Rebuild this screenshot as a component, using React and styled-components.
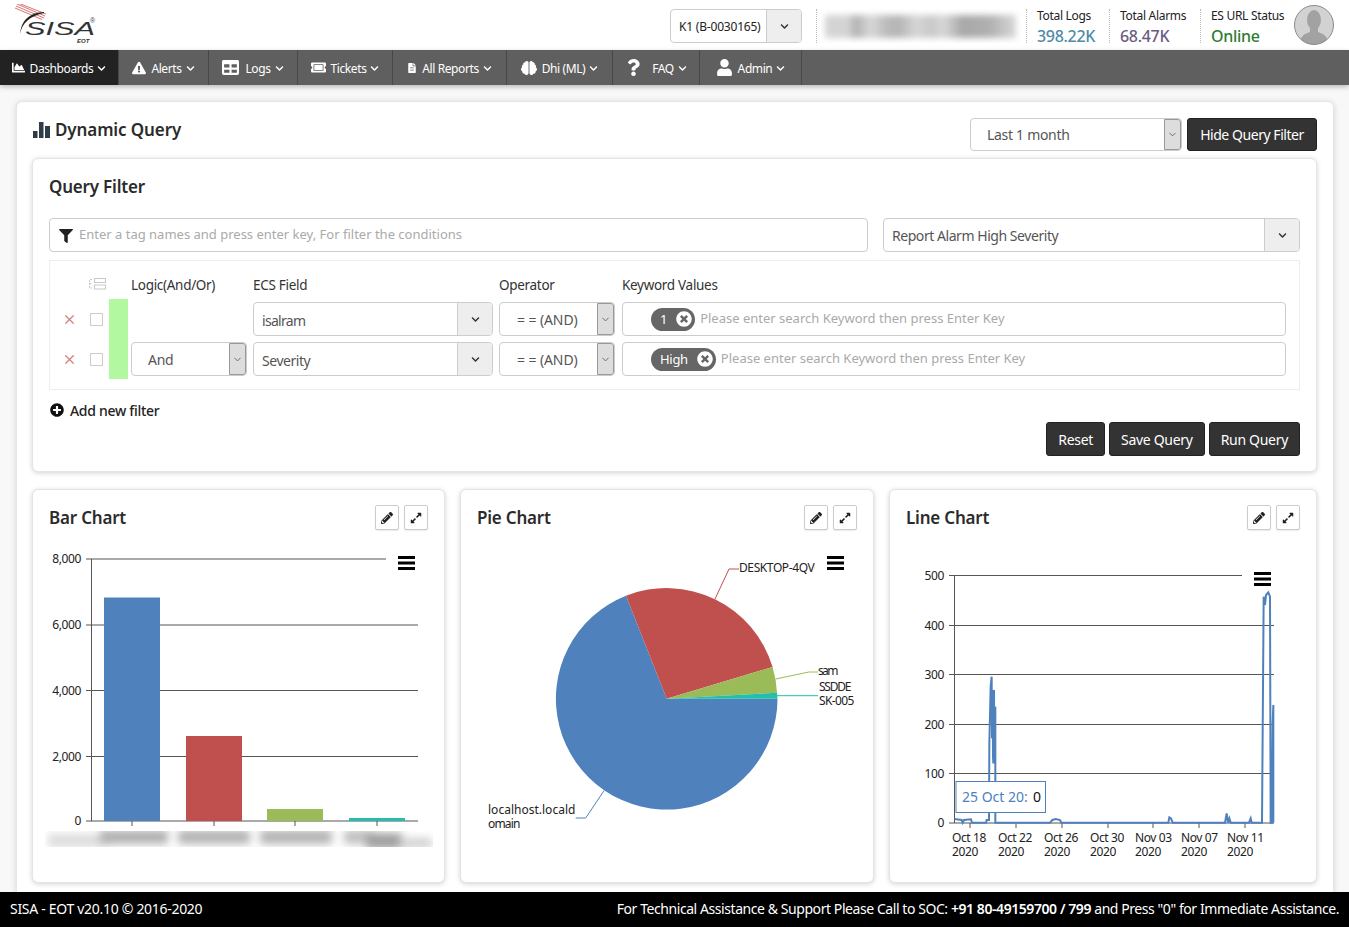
import React from "react";
import styled, { createGlobalStyle } from "styled-components";
import {
  FaChartArea,
  FaExclamationTriangle,
  FaTable,
  FaTicketAlt,
  FaFileAlt,
  FaBrain,
  FaQuestion,
  FaUser,
  FaChevronDown,
  FaFilter,
  FaPlusCircle,
  FaTimesCircle,
  FaPencilAlt,
  FaExpandAlt,
} from "react-icons/fa";
import { X, ChevronDown } from "lucide-react";

const GlobalStyle = createGlobalStyle`
  html, body {
    margin: 0;
    padding: 0;
    background: #f8f8f8;
  }
  * {
    box-sizing: border-box;
  }
  body {
    font-family: "Noto Sans", "Open Sans", sans-serif;
    font-size: 14px;
    color: #333;
    letter-spacing: -0.3px;
  }
`;

const Page = styled.div`
  height: 927px;
  display: flex;
  flex-direction: column;
  overflow: hidden;
`;

const Header = styled.header`
  height: 50px;
  flex: none;
  background: #fff;
  display: flex;
  align-items: center;
  padding: 0 15px;
`;

const Logo = styled.svg`
  width: 84px;
  height: 42px;
  flex: none;
  letter-spacing: 0;
`;

const HeaderRight = styled.div`
  margin-left: auto;
  padding-top: 2px;
  display: flex;
  align-items: center;
`;

const SiteSelect = styled.div`
  width: 132px;
  height: 34px;
  display: flex;
  border: 1px solid #ccc;
  border-radius: 4px;
  overflow: hidden;
  font-size: 12px;
  color: #222;
  margin-right: 14px;
`;

const SiteValue = styled.div`
  flex: 1;
  display: flex;
  align-items: center;
  padding: 1px 0 0 8px;
  letter-spacing: -0.2px;
`;

const ArrowCell = styled.div`
  width: 35px;
  flex: none;
  display: flex;
  align-items: center;
  justify-content: center;
  background: #eee;
  border-left: 1px solid #ccc;
  color: #333;
  font-size: 9px;
`;

const BlurWrap = styled.div`
  width: 210px;
  height: 34px;
  border-left: 1px dotted #bbb;
  padding: 6px 10px 5px 8px;
  overflow: hidden;
`;

const BlurBlock = styled.div`
  height: 23px;
  background: linear-gradient(
    90deg,
    #d4d4d4 0 12%,
    #b2b2b2 16%,
    #d8d8d8 24%,
    #bcbcbc 32%,
    #b4b4b4 38%,
    #d6d6d6 48%,
    #c8c8c8 56%,
    #d8d8d8 62%,
    #a8a8a8 72%,
    #b0b0b0 86%,
    #d8d8d8 100%
  );
  filter: blur(3px);
`;

const Stat = styled.div`
  width: ${(p) => p.$w}px;
  height: 34px;
  border-left: 1px dotted #bbb;
  padding-left: 10px;
  display: flex;
  flex-direction: column;
  justify-content: space-between;
`;

const StatLabel = styled.div`
  font-size: 12px;
  line-height: 14px;
  color: #222;
  white-space: nowrap;
`;

const StatValue = styled.div`
  font-size: 16px;
  line-height: 18px;
  margin-bottom: -2px;
  font-weight: 500;
  color: ${(p) => p.$color};
`;

const Avatar = styled.svg`
  width: 40px;
  height: 40px;
  margin-top: -2px;
  flex: none;
`;

const Nav = styled.nav`
  height: 35px;
  flex: none;
  display: flex;
  background: #5f5f5f;
  box-shadow: 0 2px 5px rgba(0, 0, 0, 0.25);
  position: relative;
`;

const NavItem = styled.div`
  width: ${(p) => p.$w}px;
  padding-top: 2px;
  display: flex;
  align-items: center;
  justify-content: center;
  gap: 5px;
  color: #fff;
  font-size: 12px;
  letter-spacing: -0.4px;
  background: ${(p) => (p.$active ? "#222" : "transparent")};
  border-right: 1px solid #484848;
  white-space: nowrap;

  svg.caret {
    font-size: 9px;
    margin-left: -1px;
  }
`;

const NavIcon = styled.span`
  display: flex;
  font-size: ${(p) => p.$size || 14}px;
  margin-top: -2px;
  margin-right: ${(p) => p.$gap || 0}px;
`;

const Main = styled.main`
  flex: 1;
  min-height: 0;
  padding: 16px 15px 0 16px;
`;

const MainCard = styled.div`
  height: 100%;
  background: #fff;
  border: 1px solid #e6e6e6;
  border-bottom: 0;
  border-radius: 6px 6px 0 0;
  box-shadow: 0 1px 6px rgba(0, 0, 0, 0.15);
  padding: 16px 16px 0 15px;
`;

const TitleRow = styled.div`
  display: flex;
  align-items: center;
  height: 33px;
  margin-bottom: 7px;
`;

const PageTitle = styled.h1`
  margin: 0 auto 0 1px;
  font-size: 17px;
  letter-spacing: -0.1px;
  font-weight: 600;
  color: #2b2b2b;
  display: flex;
  align-items: center;
  gap: 5px;
  position: relative;
  top: -5px;
`;

const Panel = styled.section`
  background: #fff;
  border: 1px solid #e4e4e4;
  border-radius: 6px;
  box-shadow: 0 1px 5px rgba(0, 0, 0, 0.18);
`;

const FilterPanel = styled(Panel)`
  padding: 16px 16px 15px;
  height: 314px;
`;

const PanelTitle = styled.h2`
  margin: 0;
  font-size: 17px;
  letter-spacing: -0.2px;
  line-height: 24px;
  font-weight: 600;
  color: #2b2b2b;
`;

const FilterBar = styled.div`
  margin-top: 19px;
  display: flex;
  justify-content: space-between;
`;

const TagBox = styled.div`
  width: 819px;
  height: 34px;
  border: 1px solid #ccc;
  border-radius: 4px;
  display: flex;
  align-items: center;
  padding: 0 0 2px 9px;
  gap: 6px;
  color: #222;
  font-size: 14px;

  svg {
    margin-top: 3px;
  }
`;

const Placeholder = styled.span`
  color: #aaa;
  font-size: 13px;
  letter-spacing: ${(p) => p.$spacing || "0"};
  white-space: nowrap;
`;

const Select = styled.div`
  width: ${(p) => p.$w}px;
  height: ${(p) => p.$h || 34}px;
  border: 1px solid #ccc;
  border-radius: 4px;
  display: flex;
  overflow: hidden;
  background: #fff;
  font-size: 14px;
  color: #555;
`;

const LogicSelect = styled(Select)`
  grid-column: 4;
`;

const SelectValue = styled.div`
  flex: 1;
  display: flex;
  align-items: center;
  padding-left: ${(p) => p.$pad || 8}px;
  padding-top: ${(p) => (p.$low ? 2 : 0)}px;
  letter-spacing: ${(p) => p.$spacing || "-0.45px"};
  white-space: nowrap;
`;

const NativeArrow = styled.div`
  width: 17px;
  flex: none;
  display: flex;
  align-items: center;
  justify-content: center;
  background: #ddd;
  border: 1px solid #999;
  border-radius: 0 3px 3px 0;
  color: #444;
`;

const RuleTable = styled.div`
  margin-top: 8px;
  border: 1px solid #eee;
  padding-bottom: 10px;
  display: grid;
  grid-template-columns: 34px 25px 22px 122px 246px 123px 664px;
  grid-template-rows: 38px 40px 40px;
  align-items: center;
`;

const ColumnHead = styled.div`
  align-self: end;
  padding-bottom: 5px;
  font-size: 13.5px;
  color: #333;
  white-space: nowrap;
`;

const GlyphHead = styled(ColumnHead)`
  padding-left: 5px;
`;

const RemoveCell = styled.div`
  display: flex;
  justify-content: flex-end;
  padding-right: 7px;
  color: #d2807e;
`;

const Check = styled.div`
  width: 13px;
  height: 13px;
  border: 1px solid #ccc;
  margin-left: 6px;
`;

const GreenBar = styled.div`
  width: 19px;
  grid-column: 3;
  grid-row: 2 / span 2;
  height: 80px;
  background: #b1f8a0;
`;

const KeywordBox = styled.div`
  height: 34px;
  border: 1px solid #ccc;
  border-radius: 4px;
  display: flex;
  align-items: center;
  padding-left: 28px;
  gap: 5px;
`;

const KeywordHint = styled(Placeholder)`
  margin-top: -2px;
`;

const Pill = styled.div`
  height: 23px;
  background: #666;
  border-radius: 12px;
  color: #fff;
  font-size: 13px;
  display: flex;
  align-items: center;
  gap: 9px;
  padding: 0 3px 0 9px;
  svg {
    font-size: 16px;
  }
`;

const AddFilter = styled.div`
  display: flex;
  align-items: center;
  gap: 6px;
  height: 20px;
  margin: 10px 0 0 1px;
  font-size: 14px;
  font-weight: 500;
  color: #222;
  svg {
    font-size: 14px;
    color: #111;
  }
`;

const Actions = styled.div`
  display: flex;
  justify-content: flex-end;
  gap: 4px;
  margin-top: 2px;
`;

const DarkButton = styled.button`
  height: 34px;
  padding: 0 11px;
  background: #333;
  border: 1px solid #222;
  border-radius: 3px;
  color: #fff;
  font: inherit;
  letter-spacing: inherit;
  font-size: 14px;
  white-space: nowrap;
  cursor: pointer;
`;

const HideButton = styled(DarkButton)`
  width: 130px;
  height: 33px;
  margin-left: 5px;
  padding: 0;
  letter-spacing: -0.45px;
`;

const ChartRow = styled.div`
  margin-top: 17px;
  display: grid;
  grid-template-columns: 413px 414px 428px;
  column-gap: 15px;
`;

const ChartCard = styled(Panel)`
  height: 394px;
  overflow: hidden;
`;

const ChartHead = styled.div`
  height: 54px;
  display: flex;
  align-items: flex-start;
  padding: 15px 16px 0;
`;

const ChartTitle = styled.h3`
  margin: 1px auto 0 0;
  font-size: 17px;
  letter-spacing: -0.2px;
  line-height: 24px;
  font-weight: 600;
  color: #2b2b2b;
`;

const IconButton = styled.button`
  width: 24px;
  height: 25px;
  margin-left: 5px;
  padding: 0;
  display: flex;
  align-items: center;
  justify-content: center;
  background: #fff;
  border: 1px solid #ccc;
  border-radius: 2px;
  color: #222;
  font-size: 12px;
  box-shadow: 0 1px 1px rgba(0, 0, 0, 0.08);
`;

const ChartSvg = styled.svg`
  display: block;
  letter-spacing: -0.4px;
  text {
    font-size: 12px;
    fill: #222;
  }
`;

const TipText = styled.text`
  && {
    font-size: 14px;
    letter-spacing: 0;
    fill: ${(p) => p.$color};
  }
`;

const Footer = styled.footer`
  height: 35px;
  flex: none;
  background: #000;
  color: #fff;
  font-size: 14px;
  display: flex;
  align-items: center;
  justify-content: space-between;
  padding: 0 10px 2px;
  position: relative;
`;

const FooterNote = styled.span`
  letter-spacing: -0.43px;
`;

const Strong = styled.b`
  font-weight: 600;
`;

const navItems = [
  { label: "Dashboards", w: 119, active: true, icon: <FaChartArea />, size: 13 },
  { label: "Alerts", w: 90, icon: <FaExclamationTriangle />, size: 14 },
  { label: "Logs", w: 89, icon: <FaTable />, size: 17, gap: 1 },
  { label: "Tickets", w: 95, icon: <FaTicketAlt />, size: 15 },
  { label: "All Reports", w: 114, icon: <FaFileAlt />, size: 10 },
  { label: "Dhi (ML)", w: 106, icon: <FaBrain />, size: 16 },
  { label: "FAQ", w: 87, icon: <FaQuestion />, size: 17, gap: 5 },
  { label: "Admin", w: 102, icon: <FaUser />, size: 17 },
];

const Caret = () => <FaChevronDown className="caret" />;

const ThinCaret = () => <ChevronDown size={11} strokeWidth={1.6} />;

const MenuBars = ({ x, y }) => (
  <g fill="#000">
    <rect x={x} y={y} width="17" height="3" />
    <rect x={x} y={y + 5.5} width="17" height="3" />
    <rect x={x} y={y + 11} width="17" height="3" />
  </g>
);

const AXIS = "#555";

const barSeries = [
  { x: 104, top: 597.5, color: "#4f81bd", tick: 132 },
  { x: 186, top: 736, color: "#c0504d", tick: 214 },
  { x: 267, top: 809, color: "#9bbb59", tick: 295 },
  { x: 349, top: 818, color: "#23bfaa", tick: 377 },
];

const BarChart = () => {
  const grid = [
    { y: 559, label: "8,000", end: 386 },
    { y: 625, label: "6,000", end: 418 },
    { y: 690.5, label: "4,000", end: 418 },
    { y: 756.5, label: "2,000", end: 418 },
    { y: 821, label: "0", end: 418 },
  ];
  return (
    <ChartSvg width="411" height="339" viewBox="33 544 411 339">
      <defs>
        <filter id="labelBlur" x="-10%" y="-100%" width="120%" height="300%">
          <feGaussianBlur stdDeviation="4" />
        </filter>
        <clipPath id="labelClip">
          <rect x="45" y="831" width="388" height="16" />
        </clipPath>
      </defs>
      {grid.map((g) => (
        <g key={g.label}>
          <line x1="86" x2={g.end} y1={g.y} y2={g.y} stroke={AXIS} />
          <text x="81" y={g.y + 4} textAnchor="end">{g.label}</text>
        </g>
      ))}
      <line x1="91.5" x2="91.5" y1="559" y2="821" stroke={AXIS} />
      {barSeries.map((b) => (
        <g key={b.x}>
          <rect x={b.x} y={b.top} width="56" height={821 - b.top} fill={b.color} />
          <line x1={b.tick} x2={b.tick} y1="821" y2="826" stroke={AXIS} />
        </g>
      ))}
      <MenuBars x={398} y={556} />
      <g clipPath="url(#labelClip)">
        <g filter="url(#labelBlur)">
          <rect x="48" y="834" width="60" height="13" fill="#dcdcdc" />
          <rect x="100" y="830" width="68" height="14" fill="#b0b0b0" />
          <rect x="178" y="830" width="72" height="14" fill="#b4b4b4" />
          <rect x="260" y="830" width="72" height="14" fill="#b4b4b4" />
          <rect x="344" y="830" width="30" height="14" fill="#c0c0c0" />
          <rect x="366" y="833" width="36" height="16" fill="#a0a0a0" />
          <rect x="400" y="838" width="32" height="10" fill="#d0d0d0" />
        </g>
      </g>
    </ChartSvg>
  );
};

const PIE = { cx: 666.7, cy: 698.7, r: 110.8 };

const slice = (x1, y1, x2, y2, large, color) => (
  <path
    d={`M${PIE.cx} ${PIE.cy}L${x1} ${y1}A${PIE.r} ${PIE.r} 0 ${large} 1 ${x2} ${y2}Z`}
    fill={color}
  />
);

const PieChart = () => (
  <ChartSvg width="412" height="339" viewBox="461 544 412 339">
    <defs>
      <clipPath id="desktopClip">
        <rect x="739" y="555" width="76" height="20" />
      </clipPath>
    </defs>
    {slice(777.5, 698.7, 626, 595.7, 1, "#4f81bd")}
    {slice(626, 595.7, 772.6, 667, 0, "#c0504d")}
    {slice(772.6, 667, 777, 692.7, 0, "#9bbb59")}
    {slice(777, 692.7, 777.5, 698.7, 0, "#23bfaa")}
    <polyline points="715,599 729,569 739,569" fill="none" stroke="#c0504d" />
    <polyline points="775.7,679 809,672 818,672" fill="none" stroke="#9bbb59" />
    <polyline points="777,695.7 818,695.7" fill="none" stroke="#23bfaa" />
    <polyline points="604,790.7 585.7,818 575.7,818" fill="none" stroke="#4f81bd" />
    <text x="739" y="572" clipPath="url(#desktopClip)">DESKTOP-4QVGH</text>
    <text x="818" y="675" textLength="20">sam</text>
    <text>
      <tspan x="819" y="691" textLength="32">SSDDE</tspan>
      <tspan x="819" y="705" textLength="35">SK-005</tspan>
    </text>
    <text>
      <tspan x="488" y="814" textLength="87">localhost.locald</tspan>
      <tspan x="488" y="828" textLength="32">omain</tspan>
    </text>
    <MenuBars x={827} y={556} />
  </ChartSvg>
);

// traced from the chart, in the coordinates of the 3x crop
const linePoints = [
  [193, 987], [215, 990], [218, 998], [222, 990], [243, 988], [246, 998], [288, 998], [290, 990],
  [297, 990], [298, 760], [302, 590], [305, 560], [306, 745], [307, 700], [308, 600], [309, 800],
  [310, 820], [311, 640], [312, 600], [313, 760], [314, 820], [315, 700], [316, 650], [316, 998],
  [480, 998], [487, 990], [497, 987], [510, 990], [514, 998], [835, 998], [838, 982], [843, 985],
  [848, 998], [1005, 998], [1010, 970], [1014, 998], [1018, 985], [1022, 998], [1077, 998], [1082, 985],
  [1085, 998], [1116, 998], [1121, 320], [1125, 345], [1128, 315], [1135, 307], [1140, 320], [1142, 998],
  [1146, 998], [1148, 700], [1150, 645], [1150, 998],
];

const LineChart = () => {
  const grid = [
    { y: 575.5, label: "500", end: 1242 },
    { y: 625.5, label: "400", end: 1274 },
    { y: 674.5, label: "300", end: 1274 },
    { y: 724.5, label: "200", end: 1274 },
    { y: 773.5, label: "100", end: 1274 },
    { y: 823, label: "0", end: 1274 },
  ];
  const ticks = [
    { x: 970, tx: 952, label: "Oct 18" },
    { x: 1016, tx: 998, label: "Oct 22" },
    { x: 1062, tx: 1044, label: "Oct 26" },
    { x: 1108, tx: 1090, label: "Oct 30" },
    { x: 1153, tx: 1135, label: "Nov 03" },
    { x: 1199, tx: 1181, label: "Nov 07" },
    { x: 1245, tx: 1227, label: "Nov 11" },
  ];
  const points = linePoints.map(([x, y]) => `${890 + x / 3},${490 + y / 3}`).join(" ");
  return (
    <ChartSvg width="426" height="339" viewBox="890 544 426 339">
      {grid.map((g) => (
        <g key={g.label}>
          <line x1="949" x2={g.end} y1={g.y} y2={g.y} stroke={AXIS} />
          <text x="944" y={g.y + 4} textAnchor="end">{g.label}</text>
        </g>
      ))}
      <line x1="954.5" x2="954.5" y1="575" y2="823" stroke={AXIS} />
      {ticks.map((t) => (
        <g key={t.label}>
          <line x1={t.x} x2={t.x} y1="823" y2="828" stroke={AXIS} />
          <text>
            <tspan x={t.tx} y="842">{t.label}</tspan>
            <tspan x={t.tx} y="856">2020</tspan>
          </text>
        </g>
      ))}
      <polyline points={points} fill="none" stroke="#4f81bd" strokeWidth="2" />
      <MenuBars x={1254} y={572} />
      <rect x="956" y="781.5" width="89.5" height="31" fill="#fff" stroke="#4f81bd" />
      <TipText x="962" y="802" $color="#4f81bd">25 Oct 20:</TipText>
      <TipText x="1033" y="802" $color="#111">0</TipText>
    </ChartSvg>
  );
};

const ChartPanel = ({ title, children }) => (
  <ChartCard>
    <ChartHead>
      <ChartTitle>{title}</ChartTitle>
      <IconButton><FaPencilAlt /></IconButton>
      <IconButton><FaExpandAlt /></IconButton>
    </ChartHead>
    {children}
  </ChartCard>
);

const ListGlyph = () => (
  <svg width="17" height="12" viewBox="0 0 17 12" fill="none" stroke="#c9c9c9">
    <rect x="5.5" y="0.5" width="11" height="4" />
    <rect x="5.5" y="7" width="11" height="4" />
    <path d="M3 1.5H0.5v8.5H3M0.5 5.5H3" strokeDasharray="2 1" />
  </svg>
);

const StatsGlyph = () => (
  <svg width="17" height="16" viewBox="0 0 17 16" fill="#2f3b46">
    <rect x="0" y="9" width="4.5" height="7" />
    <rect x="6" y="0" width="4.5" height="16" />
    <rect x="12" y="4" width="5" height="12" />
  </svg>
);

const SisaLogo = () => (
  <Logo viewBox="0 0 84 42">
    <g stroke="#c8373b" strokeWidth="0.7">
      <line x1="1" y1="2" x2="29" y2="14" />
      <line x1="2" y1="0" x2="30" y2="12" />
      <line x1="0" y1="4" x2="27" y2="15.5" />
      <line x1="3" y1="-1" x2="31" y2="10" />
    </g>
    <path d="M29 8C16 9 7 14 5 30C7 19 15 12 29 9Z" fill="#222" />
    <text x="10" y="31" textLength="70" lengthAdjust="spacingAndGlyphs" fontFamily="Liberation Sans" fontStyle="italic" fontSize="18" fill="#333">SISA</text>
    <text x="75" y="19" fontFamily="Liberation Sans" fontSize="7" fill="#444">®</text>
    <text x="62" y="39" fontFamily="Liberation Sans" fontStyle="italic" fontWeight="700" fontSize="6" fill="#333">EOT</text>
  </Logo>
);

const App = () => (
  <Page>
    <GlobalStyle />
    <Header>
      <SisaLogo />
      <HeaderRight>
        <SiteSelect>
          <SiteValue>K1 (B-0030165)</SiteValue>
          <ArrowCell><FaChevronDown /></ArrowCell>
        </SiteSelect>
        <BlurWrap><BlurBlock /></BlurWrap>
        <Stat $w={83}>
          <StatLabel>Total Logs</StatLabel>
          <StatValue $color="#4f8aa8">398.22K</StatValue>
        </Stat>
        <Stat $w={91}>
          <StatLabel>Total Alarms</StatLabel>
          <StatValue $color="#6b5b83">68.47K</StatValue>
        </Stat>
        <Stat $w={94}>
          <StatLabel>ES URL Status</StatLabel>
          <StatValue $color="#2e7d32">Online</StatValue>
        </Stat>
        <Avatar viewBox="0 0 40 40">
          <defs>
            <clipPath id="avatarClip">
              <ellipse cx="20" cy="20" rx="19.5" ry="19.5" />
            </clipPath>
          </defs>
          <g clipPath="url(#avatarClip)">
            <rect width="40" height="40" fill="#d2d2d2" />
            <ellipse cx="20" cy="15" rx="7" ry="10" fill="#a2a2a2" />
            <path d="M16 22h8v5c5 2 10 3 10 13H6c0-10 5-11 10-13z" fill="#a2a2a2" />
          </g>
          <circle cx="20" cy="20" r="19.5" fill="none" stroke="#8a8a8a" />
        </Avatar>
      </HeaderRight>
    </Header>

    <Nav>
      {navItems.map((item) => (
        <NavItem key={item.label} $w={item.w} $active={item.active}>
          <NavIcon $size={item.size} $gap={item.gap}>{item.icon}</NavIcon>
          {item.label}
          <Caret />
        </NavItem>
      ))}
    </Nav>

    <Main>
      <MainCard>
        <TitleRow>
          <PageTitle><StatsGlyph />Dynamic Query</PageTitle>
          <Select $w={212} $h={33}>
            <SelectValue $pad={16} $spacing="-0.3px">Last 1 month</SelectValue>
            <NativeArrow><ThinCaret /></NativeArrow>
          </Select>
          <HideButton>Hide Query Filter</HideButton>
        </TitleRow>

        <FilterPanel>
          <PanelTitle>Query Filter</PanelTitle>
          <FilterBar>
            <TagBox>
              <FaFilter />
              <Placeholder>Enter a tag names and press enter key, For filter the conditions</Placeholder>
            </TagBox>
            <Select $w={417}>
              <SelectValue $spacing="-0.45px">Report Alarm High Severity</SelectValue>
              <ArrowCell><FaChevronDown /></ArrowCell>
            </Select>
          </FilterBar>

          <RuleTable>
            <span />
            <GlyphHead><ListGlyph /></GlyphHead>
            <span />
            <ColumnHead>Logic(And/Or)</ColumnHead>
            <ColumnHead>ECS Field</ColumnHead>
            <ColumnHead>Operator</ColumnHead>
            <ColumnHead>Keyword Values</ColumnHead>

            <RemoveCell><X size={15} strokeWidth={2} /></RemoveCell>
            <Check />
            <GreenBar />
            <span />
            <Select $w={240}>
              <SelectValue $low $spacing="-0.7px">isalram</SelectValue>
              <ArrowCell><FaChevronDown /></ArrowCell>
            </Select>
            <Select $w={116}>
              <SelectValue $pad={17} $spacing="-0.1px">= = (AND)</SelectValue>
              <NativeArrow><ThinCaret /></NativeArrow>
            </Select>
            <KeywordBox>
              <Pill>1<FaTimesCircle /></Pill>
              <KeywordHint>Please enter search Keyword then press Enter Key</KeywordHint>
            </KeywordBox>

            <RemoveCell><X size={15} strokeWidth={2} /></RemoveCell>
            <Check />
            <LogicSelect $w={116}>
              <SelectValue $pad={16} $spacing="-0.3px">And</SelectValue>
              <NativeArrow><ThinCaret /></NativeArrow>
            </LogicSelect>
            <Select $w={240}>
              <SelectValue $low>Severity</SelectValue>
              <ArrowCell><FaChevronDown /></ArrowCell>
            </Select>
            <Select $w={116}>
              <SelectValue $pad={17} $spacing="-0.1px">= = (AND)</SelectValue>
              <NativeArrow><ThinCaret /></NativeArrow>
            </Select>
            <KeywordBox>
              <Pill>High<FaTimesCircle /></Pill>
              <KeywordHint>Please enter search Keyword then press Enter Key</KeywordHint>
            </KeywordBox>
          </RuleTable>

          <AddFilter><FaPlusCircle />Add new filter</AddFilter>

          <Actions>
            <DarkButton>Reset</DarkButton>
            <DarkButton>Save Query</DarkButton>
            <DarkButton>Run Query</DarkButton>
          </Actions>
        </FilterPanel>

        <ChartRow>
          <ChartPanel title="Bar Chart"><BarChart /></ChartPanel>
          <ChartPanel title="Pie Chart"><PieChart /></ChartPanel>
          <ChartPanel title="Line Chart"><LineChart /></ChartPanel>
        </ChartRow>
      </MainCard>
    </Main>

    <Footer>
      <span>SISA - EOT v20.10 © 2016-2020</span>
      <FooterNote>
        For Technical Assistance &amp; Support Please Call to SOC: <Strong>+91 80-49159700 / 799</Strong> and Press "0" for Immediate Assistance.
      </FooterNote>
    </Footer>
  </Page>
);

export default App;
